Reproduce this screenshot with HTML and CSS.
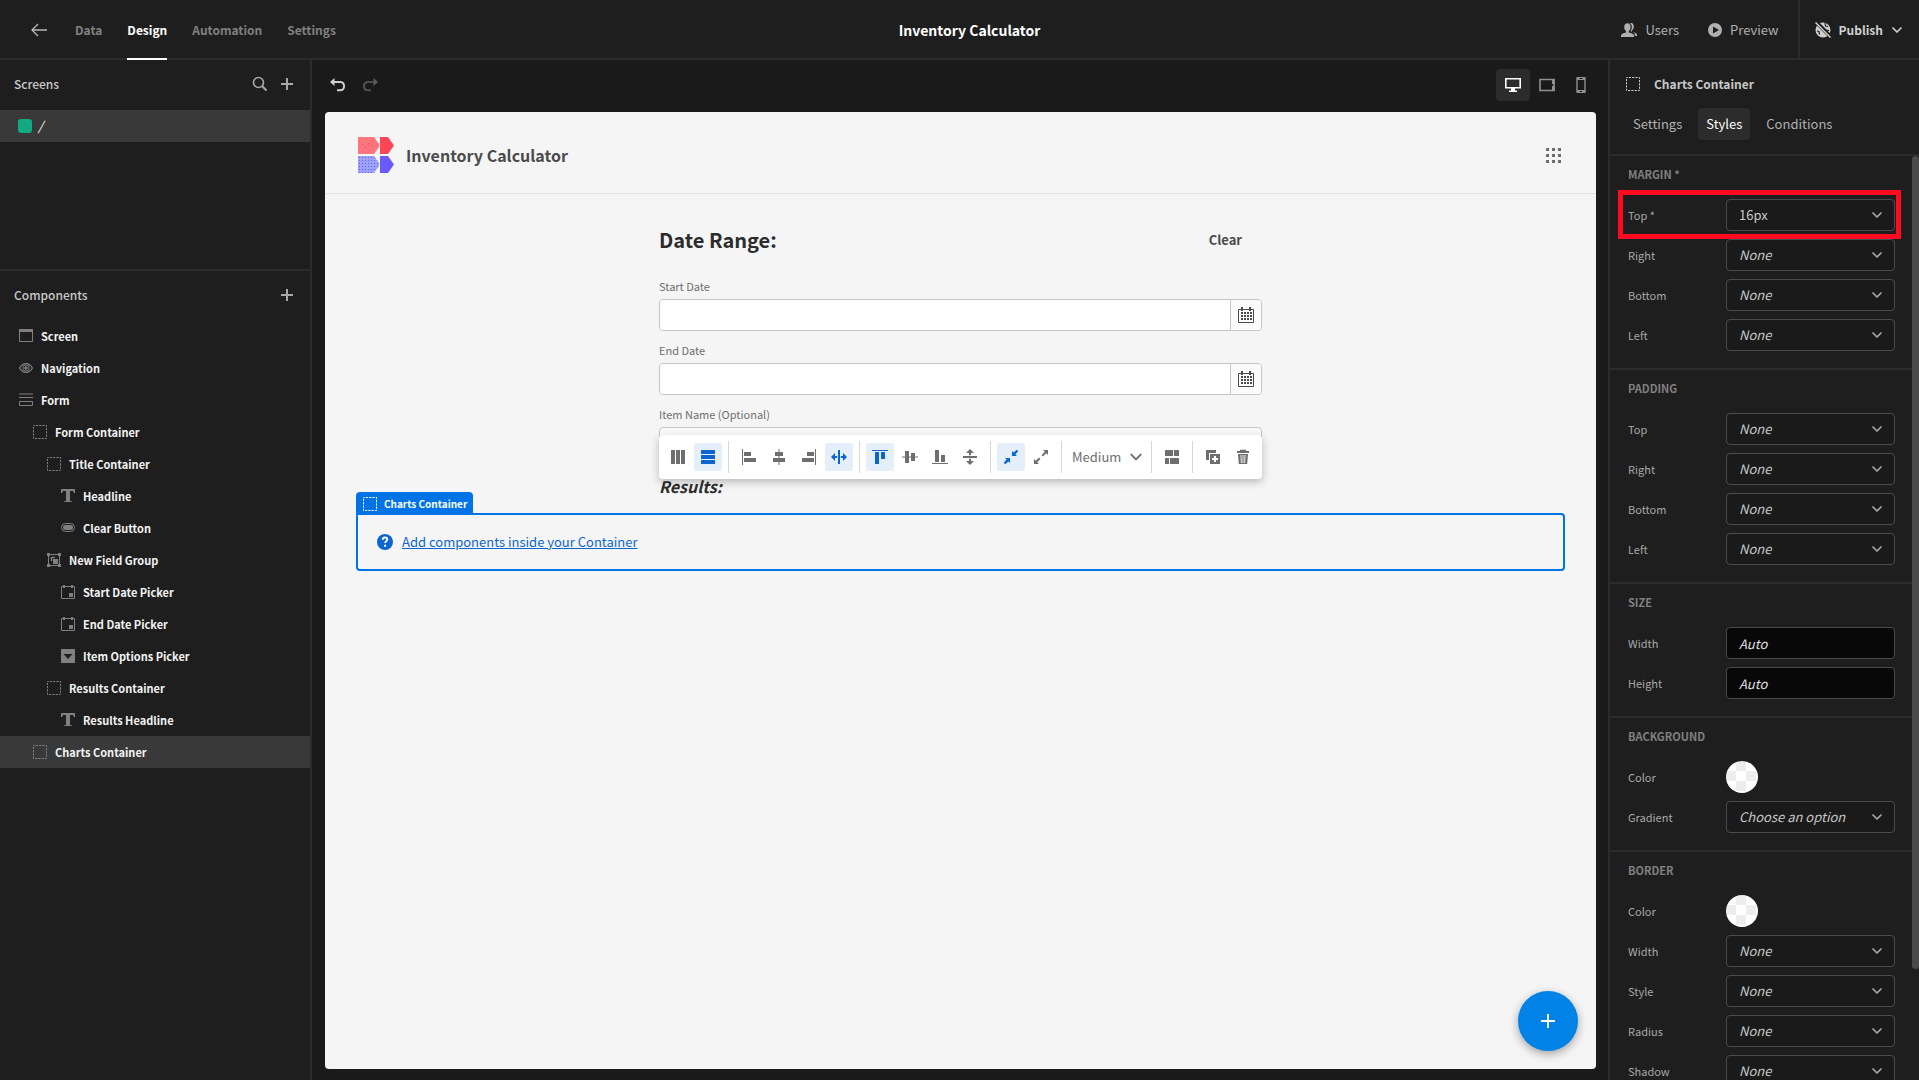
FILE: index.html
```html
<!DOCTYPE html>
<html lang="en">
<head>
<meta charset="utf-8">
<title>Inventory Calculator</title>
<meta name="viewport" content="width=device-width, initial-scale=1">
<link rel="stylesheet" href="styles.css">
</head>
<body>
<svg class="sprite" aria-hidden="true">
  <symbol id="i-chevron" viewBox="0 0 12 12"><path d="M2 4l4 4 4-4" fill="none" stroke="currentColor" stroke-width="1.7" stroke-linecap="round" stroke-linejoin="round"/></symbol>
  <symbol id="i-plus" viewBox="0 0 14 14"><path d="M7 1v12M1 7h12" stroke="currentColor" stroke-width="2"/></symbol>
  <symbol id="i-box" viewBox="0 0 14 14"><rect x=".5" y=".5" width="13" height="13" fill="none" stroke="currentColor" stroke-dasharray="2.2 1.1" stroke-dashoffset="1"/></symbol>
  <symbol id="i-text" viewBox="0 0 14 14"><path d="M0 0h14v4h-1.200l-.8-2H9v9.800l2 .6V13H3v-.6l2-.6V2H2l-.8 2H0z" fill="currentColor"/></symbol>
  <symbol id="i-date" viewBox="0 0 14 14"><path d="M.5 1.500h13v12H.5z" fill="none" stroke="currentColor"/><path d="M2 0h2v3H2zM10 0h2v3h-2zM8 8h4v4H8z" fill="currentColor"/></symbol>
  <symbol id="i-cal" viewBox="0 0 18 18"><path d="M1.500 3.500h15v13h-15z" fill="none" stroke="currentColor"/><path d="M4 1h2v4H4zM12 1h2v4h-2zM4 6h2v2H4zM7 6h2v2H7zM10 6h2v2h-2zM13 6h2v2h-2zM4 9h2v2H4zM7 9h2v2H7zM10 9h2v2h-2zM13 9h2v2h-2zM4 12h2v2H4zM7 12h2v2H7zM10 12h2v2h-2zM13 12h2v2h-2z" fill="currentColor"/></symbol>
</svg>
<div class="builder">
  <header class="topbar">
    <nav class="topnav" aria-label="App">
      <a class="back" href="#" aria-label="Back"><svg width="16" height="14" viewBox="0 0 16 14"><path d="M7 1L1 7l6 6M1 7h15" fill="none" stroke="currentColor" stroke-width="1.300"/></svg></a>
      <a href="#">Data</a>
      <a class="active" href="#">Design</a>
      <a href="#">Automation</a>
      <a href="#">Settings</a>
    </nav>
    <h1 class="app-name">Inventory Calculator</h1>
    <div class="top-actions">
      <button class="top-btn" type="button"><svg width="16" height="16" viewBox="0 0 16 16" fill="currentColor"><path d="M11.500 10.200c-.8-.3-.9-1.300-.3-1.900 1-1 1.600-2.200 1.600-3.900C12.800 2.200 11.600 1 10 1c-.4 0-.8.100-1.100.2C10.200 2 10.800 3.200 10.800 4.900c0 1.600-.5 2.900-1.300 4l4.300 2.700v2.300H16v-1.100c0-1.600-2.400-2.300-4.500-2.600z"/><path d="M8.300 10.700c-.8-.3-.9-1.200-.4-1.700C9 7.900 9.600 6.600 9.600 4.900 9.600 2.600 8.300 1.300 6.400 1.300S3.200 2.600 3.200 4.900c0 1.700.6 3 1.700 4.100.5.5.4 1.400-.4 1.700C2.400 11 0 11.900 0 13.500V15h13v-1.500c0-1.600-2.600-2.500-4.700-2.800z"/></svg>Users</button>
      <button class="top-btn" type="button"><svg width="14" height="14" viewBox="0 0 14 14"><path fill="currentColor" fill-rule="evenodd" d="M7 0a7 7 0 1 0 0 14A7 7 0 0 0 7 0zM5 3.500l6 3.500-6 3.500z"/></svg>Preview</button>
      <button class="top-btn publish" type="button"><svg width="16" height="16" viewBox="0 0 16 16"><circle cx="8" cy="8" r="7.500" fill="currentColor"/><path d="M5 2.500l1.500 2M2 9l2 .5.5 3M10 1l.5 3 2.500.5M11 8l3 .5" fill="none" stroke="#1e1e1e" stroke-width="1.200"/><path d="M1 0l16 16" stroke="#1e1e1e" stroke-width="4"/><path d="M.5.500l15 15" stroke="currentColor" stroke-width="1.500"/></svg>Publish<svg width="12" height="12"><use href="#i-chevron"/></svg></button>
    </div>
  </header>

  <aside class="left">
    <section class="screens">
      <div class="panel-head">
        <h2>Screens</h2>
        <button class="icon-btn" type="button" aria-label="Search"><svg width="16" height="16" viewBox="0 0 16 16"><circle cx="6.500" cy="6.500" r="5" fill="none" stroke="currentColor" stroke-width="1.600"/><path d="M10.200 10.200L14.500 14.500" stroke="currentColor" stroke-width="2"/></svg></button>
        <button class="icon-btn" type="button" aria-label="Add screen"><svg width="14" height="14"><use href="#i-plus"/></svg></button>
      </div>
      <a class="screen-row" href="#"><span class="swatch"></span><em>/</em></a>
    </section>
    <section class="components">
      <div class="panel-head">
        <h2>Components</h2>
        <button class="icon-btn" type="button" aria-label="Add component"><svg width="14" height="14"><use href="#i-plus"/></svg></button>
      </div>
      <ul class="tree">
        <li class="l0"><svg width="14" height="14" viewBox="0 0 14 14"><path d="M.5 1.500h13v11H.5z" fill="none" stroke="currentColor"/><path d="M0 0h14v3H0z" fill="currentColor"/></svg>Screen</li>
        <li class="l0"><svg width="14" height="14" viewBox="0 0 14 14"><path d="M.6 7C2.200 4 4.500 2.600 7 2.600S11.800 4 13.400 7C11.800 10 9.500 11.400 7 11.400S2.200 10 .6 7z" fill="none" stroke="currentColor" stroke-width="1.200"/><circle cx="7" cy="7" r="3.200" fill="none" stroke="currentColor"/><circle cx="7" cy="7" r="1.800" fill="currentColor"/></svg>Navigation</li>
        <li class="l0"><svg width="14" height="14" viewBox="0 0 14 14"><path d="M0 1h14M0 4.500h14" stroke="currentColor"/><path d="M.5 8.500h13v4H.5z" fill="none" stroke="currentColor"/></svg>Form</li>
        <li class="l1"><svg width="14" height="14"><use href="#i-box"/></svg>Form Container</li>
        <li class="l2"><svg width="14" height="14"><use href="#i-box"/></svg>Title Container</li>
        <li class="l3"><svg width="14" height="14"><use href="#i-text"/></svg>Headline</li>
        <li class="l3"><svg width="14" height="14" viewBox="0 0 14 14"><rect x=".5" y="2.500" width="13" height="8" rx="4" fill="none" stroke="currentColor"/><rect x="2" y="4" width="10" height="5" rx="2.500" fill="currentColor"/></svg>Clear Button</li>
        <li class="l2"><svg width="14" height="14" viewBox="0 0 14 14"><path d="M1.500 1.500h11v11h-11z" fill="none" stroke="currentColor"/><path d="M0 0h3v3H0zM11 0h3v3h-3zM0 11h3v3H0zM11 11h3v3h-3zM6 6h5v5H6z" fill="currentColor"/><path d="M4.500 8V4.500H8" fill="none" stroke="currentColor" stroke-width="1.500"/></svg>New Field Group</li>
        <li class="l3"><svg width="14" height="14"><use href="#i-date"/></svg>Start Date Picker</li>
        <li class="l3"><svg width="14" height="14"><use href="#i-date"/></svg>End Date Picker</li>
        <li class="l3"><svg width="14" height="14" viewBox="0 0 14 14"><path fill="currentColor" fill-rule="evenodd" d="M0 0h14v14H0zM2.500 5L7 10l4.500-5z"/></svg>Item Options Picker</li>
        <li class="l2"><svg width="14" height="14"><use href="#i-box"/></svg>Results Container</li>
        <li class="l3"><svg width="14" height="14"><use href="#i-text"/></svg>Results Headline</li>
        <li class="l1 selected"><svg width="14" height="14"><use href="#i-box"/></svg>Charts Container</li>
      </ul>
    </section>
  </aside>

  <main class="stage">
    <div class="stage-bar">
      <button class="icon-btn bright" type="button" aria-label="Undo"><svg width="16" height="14" viewBox="0 0 16 14"><path d="M2 4h8.500a4.200 4.200 0 0 1 0 8.300H7" fill="none" stroke="currentColor" stroke-width="1.900"/><path d="M0 4l4.500-4v8z" fill="currentColor"/></svg></button>
      <button class="icon-btn dim" type="button" aria-label="Redo"><svg width="16" height="14" viewBox="0 0 16 14"><path d="M14 4H5.500a4.200 4.200 0 0 0 0 8.300H9" fill="none" stroke="currentColor" stroke-width="1.600"/><path d="M16 4l-4.500-4v8z" fill="currentColor"/></svg></button>
      <div class="devices">
        <button class="device on" type="button" aria-label="Desktop"><svg width="16" height="16" viewBox="0 0 16 16"><path d="M.8 1.800h14.400v9H.8z" fill="none" stroke="currentColor" stroke-width="1.600"/><path d="M6 11h4v2.500h2V15H4v-1.500h2z" fill="currentColor"/></svg></button>
        <button class="device" type="button" aria-label="Tablet"><svg width="16" height="16" viewBox="0 0 16 16"><path d="M1 2.500h14v11H1z" fill="none" stroke="currentColor" stroke-width="1.600"/><path d="M13 2h3v5h-3zM13 9h3v5h-3z" fill="currentColor"/></svg></button>
        <button class="device" type="button" aria-label="Mobile"><svg width="16" height="16" viewBox="0 0 16 16"><path d="M4 1h8v14H4z" fill="none" stroke="currentColor" stroke-width="1.400"/><path d="M4 0h8v3H4zM4 13h8v3H4z" fill="currentColor"/><path d="M7 14.500h2M6.500 1.500h3" stroke="#1a1a1a"/></svg></button>
      </div>
    </div>
    <div class="frame">
      <header class="app-head">
        <svg width="36" height="36" viewBox="0 0 36 36">
          <defs><pattern id="dots" width="3" height="3" patternUnits="userSpaceOnUse"><path d="M1 2h1v1H1z" fill="#6a5cf5"/></pattern></defs>
          <path d="M0 0h16l5 7v3l-5 7H0z" fill="#ff757d"/><path d="M22 0h8l6 8.500-6 8.500h-8z" fill="#ff4656"/>
          <path d="M4 7h1v1H4zM10 6h1v1h-1zM14 8h1v1h-1zM7 10h1v1H7zM11 13h1v1h-1z" fill="#ff4656"/>
          <path d="M0 19h16l5 7v3l-5 7H0z" fill="#9aa3f8"/><path d="M0 19h16l5 7v3l-5 7H0z" fill="url(#dots)"/><path d="M22 19h8l6 8.500-6 8.500h-8z" fill="#6a5af9"/>
        </svg>
        <h2>Inventory Calculator</h2>
        <button class="apps" type="button" aria-label="Apps"><svg width="15" height="15" viewBox="0 0 15 15"><path d="M0 0h3v3H0zM6 0h3v3H6zM12 0h3v3h-3zM0 6h3v3H0zM6 6h3v3H6zM12 6h3v3h-3zM0 12h3v3H0zM6 12h3v3H6zM12 12h3v3h-3z" fill="currentColor"/></svg></button>
      </header>
      <div class="form-wrap">
        <div class="form-area">
          <div class="form-title"><h3>Date Range:</h3><button class="clear" type="button">Clear</button></div>
          <div class="field"><label for="start">Start Date</label><div class="date"><input id="start" type="text"><button type="button" aria-label="Pick start date"><svg width="18" height="18"><use href="#i-cal"/></svg></button></div></div>
          <div class="field"><label for="end">End Date</label><div class="date"><input id="end" type="text"><button type="button" aria-label="Pick end date"><svg width="18" height="18"><use href="#i-cal"/></svg></button></div></div>
          <div class="field"><label for="item">Item Name (Optional)</label><select id="item" class="item"><option></option></select></div>
          <h4>Results:</h4>
          <div class="float-bar" role="toolbar">
            <button type="button" aria-label="Columns"><svg width="16" height="16" viewBox="0 0 16 16"><path d="M1 1h4v14H1zM6 1h4v14H6zM11 1h4v14h-4z"/></svg></button>
            <button class="on" type="button" aria-label="Rows"><svg width="16" height="16" viewBox="0 0 16 16"><path d="M1 1h14v4H1zM1 6h14v4H1zM1 11h14v4H1z"/></svg></button>
            <i></i>
            <button type="button" aria-label="Align left"><svg width="16" height="16" viewBox="0 0 16 16"><path d="M1 0h1v16H1zM3 3h7v4H3zM3 9h12v4H3z"/></svg></button>
            <button type="button" aria-label="Align center"><svg width="16" height="16" viewBox="0 0 16 16"><path d="M7.500 0h1v16h-1zM4 3h8v4H4zM2 9h12v4H2z"/></svg></button>
            <button type="button" aria-label="Align right"><svg width="16" height="16" viewBox="0 0 16 16"><path d="M14 0h1v16h-1zM6 3h7v4H6zM1 9h12v4H1z"/></svg></button>
            <button class="on" type="button" aria-label="Stretch"><svg width="16" height="16" viewBox="0 0 16 16"><path d="M7 1h2v14H7zM0 8l4-4v3h2.200v2H4v3zM16 8l-4-4v3H9.800v2H12v3z"/></svg></button>
            <i></i>
            <button class="on" type="button" aria-label="Align top"><svg width="16" height="16" viewBox="0 0 16 16"><path d="M0 1h16v1H0zM3 3h4v12H3zM9 3h4v7H9z"/></svg></button>
            <button type="button" aria-label="Align middle"><svg width="16" height="16" viewBox="0 0 16 16"><path d="M0 7.500h16v1H0zM3 2h4v12H3zM9 4h4v8H9z"/></svg></button>
            <button type="button" aria-label="Align bottom"><svg width="16" height="16" viewBox="0 0 16 16"><path d="M0 14h16v1H0zM3 1h4v12H3zM9 6h4v7H9z"/></svg></button>
            <button type="button" aria-label="Stretch vertically"><svg width="16" height="16" viewBox="0 0 16 16"><path d="M1 7h14v2H1zM8 0l4 4H9v2.200H7V4H4zM8 16l4-4H9V9.800H7V12H4z"/></svg></button>
            <i></i>
            <button class="on" type="button" aria-label="Shrink"><svg width="16" height="16" viewBox="0 0 16 16"><path d="M9 7V2l1.600 1.600L13.800.800 15.200 2.200 12.400 5.400 14 7zM7 9v5l-1.600-1.600L2.200 15.200.800 13.800 3.600 10.600 2 9z"/></svg></button>
            <button type="button" aria-label="Grow"><svg width="16" height="16" viewBox="0 0 16 16"><path d="M15 1v5l-1.800-1.800L10 7.400 8.600 6l3.200-3.200L10 1zM1 15v-5l1.800 1.800L6 8.600 7.400 10l-3.200 3.200L6 15z"/></svg></button>
            <i></i>
            <button class="size" type="button">Medium<svg width="14" height="14"><use href="#i-chevron"/></svg></button>
            <i></i>
            <button type="button" aria-label="Layout"><svg width="16" height="16" viewBox="0 0 16 16"><path d="M1 1h8v6H1zM10 1h5v6h-5zM1 9h4v6H1zM6 9h9v6H6z"/></svg></button>
            <i></i>
            <button type="button" aria-label="Duplicate"><svg width="16" height="16" viewBox="0 0 16 16"><path fill-rule="evenodd" d="M1 1h10v3H4v7H1zM5 5h10v10H5zM9 7v2H7v2h2v2h2v-2h2V9h-2V7z"/></svg></button>
            <button type="button" aria-label="Delete"><svg width="16" height="16" viewBox="0 0 16 16"><path fill-rule="evenodd" d="M5 2V.800h6V2h3v2H2V2zM3 5h10l-.8 10H3.800zM5.500 6l.4 8h.8l-.3-8zM7.600 6v8h.8V6zM9.600 6l-.3 8h.8l.4-8z"/></svg></button>
          </div>
        </div>
        <div class="charts">
          <span class="charts-tag"><svg width="14" height="14"><use href="#i-box"/></svg>Charts Container</span>
          <svg width="16" height="16" viewBox="0 0 16 16"><circle cx="8" cy="8" r="8" fill="#0d66d0"/><path d="M5.800 5.800C5.800 4.400 6.700 3.500 8.100 3.500s2.200.8 2.200 2c0 1.600-2.100 1.700-2.100 3.500M8.100 10.800v2" fill="none" stroke="#fff" stroke-width="1.900"/></svg>
          <a href="#">Add components inside your Container</a>
        </div>
      </div>
      <button class="fab" type="button" aria-label="Add"><svg width="16" height="16" viewBox="0 0 16 16"><path d="M8 1v14M1 8h14" stroke="#fff" stroke-width="2"/></svg></button>
    </div>
  </main>

  <aside class="right">
    <div class="props-head">
      <h2><svg width="14" height="14"><use href="#i-box"/></svg>Charts Container</h2>
      <div class="tabs"><button type="button">Settings</button><button class="on" type="button">Styles</button><button type="button">Conditions</button></div>
    </div>
    <div class="props">
      <section>
        <h3>MARGIN *</h3>
        <div class="prop highlight"><label for="m1">Top *</label><span class="sel"><select id="m1" class="set"><option>16px</option></select><svg width="12" height="12"><use href="#i-chevron"/></svg></span></div>
        <div class="prop"><label for="m2">Right</label><span class="sel"><select id="m2"><option>None</option></select><svg width="12" height="12"><use href="#i-chevron"/></svg></span></div>
        <div class="prop"><label for="m3">Bottom</label><span class="sel"><select id="m3"><option>None</option></select><svg width="12" height="12"><use href="#i-chevron"/></svg></span></div>
        <div class="prop"><label for="m4">Left</label><span class="sel"><select id="m4"><option>None</option></select><svg width="12" height="12"><use href="#i-chevron"/></svg></span></div>
      </section>
      <section>
        <h3>PADDING</h3>
        <div class="prop"><label for="p1">Top</label><span class="sel"><select id="p1"><option>None</option></select><svg width="12" height="12"><use href="#i-chevron"/></svg></span></div>
        <div class="prop"><label for="p2">Right</label><span class="sel"><select id="p2"><option>None</option></select><svg width="12" height="12"><use href="#i-chevron"/></svg></span></div>
        <div class="prop"><label for="p3">Bottom</label><span class="sel"><select id="p3"><option>None</option></select><svg width="12" height="12"><use href="#i-chevron"/></svg></span></div>
        <div class="prop"><label for="p4">Left</label><span class="sel"><select id="p4"><option>None</option></select><svg width="12" height="12"><use href="#i-chevron"/></svg></span></div>
      </section>
      <section>
        <h3>SIZE</h3>
        <div class="prop"><label for="w">Width</label><input id="w" type="text" placeholder="Auto"></div>
        <div class="prop"><label for="h">Height</label><input id="h" type="text" placeholder="Auto"></div>
      </section>
      <section>
        <h3>BACKGROUND</h3>
        <div class="prop"><label for="bgc">Color</label><button id="bgc" class="color" type="button"></button></div>
        <div class="prop"><label for="g">Gradient</label><span class="sel"><select id="g"><option>Choose an option</option></select><svg width="12" height="12"><use href="#i-chevron"/></svg></span></div>
      </section>
      <section>
        <h3>BORDER</h3>
        <div class="prop"><label for="bc">Color</label><button id="bc" class="color" type="button"></button></div>
        <div class="prop"><label for="b1">Width</label><span class="sel"><select id="b1"><option>None</option></select><svg width="12" height="12"><use href="#i-chevron"/></svg></span></div>
        <div class="prop"><label for="b2">Style</label><span class="sel"><select id="b2"><option>None</option></select><svg width="12" height="12"><use href="#i-chevron"/></svg></span></div>
        <div class="prop"><label for="b3">Radius</label><span class="sel"><select id="b3"><option>None</option></select><svg width="12" height="12"><use href="#i-chevron"/></svg></span></div>
        <div class="prop"><label for="b4">Shadow</label><span class="sel"><select id="b4"><option>None</option></select><svg width="12" height="12"><use href="#i-chevron"/></svg></span></div>
      </section>
      <div class="thumb"></div>
    </div>
  </aside>
</div>
</body>
</html>
```
FILE: styles.css
```css
* { box-sizing: border-box; }
body, h1, h2, h3, h4, ul { margin: 0; padding: 0; }
body {
  background: #1a1a1a;
  color: #c8c8c8;
  font: 400 13px/20px "Source Sans Pro", "Noto Sans CJK SC", sans-serif;
}
h1, h2, h3, h4 { font-size: 12px; font-weight: 500; }
svg { display: block; flex: none; }
button, input, select { font: inherit; color: inherit; }
button { background: none; border: 0; padding: 0; cursor: pointer; }
a { color: inherit; text-decoration: none; }
.sprite { position: absolute; width: 0; height: 0; }

.builder {
  height: 100vh;
  display: grid;
  grid-template: 60px minmax(0, 1fr) / 312px minmax(0, 1fr) 311px;
  overflow: hidden;
}

/* Top bar */
.topbar {
  grid-column: 1 / -1;
  display: grid;
  grid-template-columns: 1fr auto 1fr;
  align-items: stretch;
  padding-left: 20px;
  background: #1e1e1e;
  box-shadow: inset 0 -2px #2c2c2c;
}
.topnav { display: flex; gap: 25px; color: #808080; font-size: 12px; font-weight: 600; padding-left: 11px; }
.topnav a { display: flex; align-items: center; }
.topnav .back { color: #b8b8b8; margin-right: 3px; }
.topnav .active { color: #fff; box-shadow: inset 0 -2px #fff; }
.app-name { align-self: center; color: #fff; font-size: 14px; font-weight: 600; }
.top-actions { display: flex; justify-content: flex-end; }
.top-btn { display: flex; align-items: center; gap: 8px; margin-right: 29px; color: #b0b0b0; }
.top-btn + .top-btn { margin-right: 19px; }
.top-btn.top-btn.publish {
  margin: 0;
  padding: 0 16px 0 15px;
  border-left: 2px solid #2c2c2c;
  color: #d0d0d0;
  font-size: 12px;
  font-weight: 600;
}

/* Left side */
.left { display: flex; flex-direction: column; background: #1e1e1e; border-right: 2px solid #2c2c2c; }
.screens { height: 211px; border-bottom: 2px solid #2c2c2c; }
.panel-head { display: flex; align-items: center; gap: 12px; height: 50px; padding: 0 16px 2px 14px; }
.components .panel-head { height: 49px; }
.panel-head h2 { flex: 1; }
.icon-btn { color: #a8a8a8; }
.screen-row { display: flex; align-items: center; gap: 6px; height: 32px; padding-left: 18px; background: #393939; color: #fff; }
.swatch { width: 14px; height: 14px; border-radius: 3px; background: #12a983; }
.tree { list-style: none; color: #f2f2f2; font-size: 11px; font-weight: 700; }
.tree li { display: flex; align-items: center; gap: 8px; height: 32px; }
.tree svg { color: #808080; }
.tree .l0 { padding-left: 19px; }
.tree .l1 { padding-left: 33px; }
.tree .l2 { padding-left: 47px; }
.tree .l3 { padding-left: 61px; }
.tree .selected { background: #393939; }

/* Canvas */
.stage { display: flex; flex-direction: column; padding-bottom: 11px; }
.stage-bar { display: flex; align-items: center; gap: 16px; height: 52px; padding: 0 10px 2px 18px; }
.bright { color: #d0d0d0; }
.dim { color: #5c5c5c; }
.devices { display: flex; margin-left: auto; }
.device { display: grid; place-items: center; width: 34px; height: 32px; border-radius: 4px; color: #909090; }
.device.on { background: #2c2c2c; color: #fff; }
.frame { position: relative; flex: 1; margin: 0 12px 0 13px; border-radius: 4px; background: #f5f5f5; color: #4b4b4b; }
.app-head { display: flex; align-items: center; gap: 12px; height: 82px; padding: 5px 35px 0 33px; border-bottom: 1px solid #e1e1e1; }
.app-head h2 { flex: 1; font-size: 16px; font-weight: 600; line-height: 24px; }
.apps { color: #6e6e6e; }
.form-wrap { padding: 30px 31px; }
.form-area { position: relative; width: 603px; max-width: 100%; margin: 0 auto; }
.form-title { display: flex; align-items: center; justify-content: space-between; height: 32px; padding-right: 20px; margin-bottom: 18px; }
.form-title h3 { font-size: 20px; font-weight: 600; color: #2c2c2c; }
.clear { font-weight: 700; }
.field { display: flex; flex-direction: column; height: 64px; font-size: 11px; color: #6e6e6e; }
.field label { height: 25px; line-height: 24px; }
.date { display: flex; height: 32px; border: 1px solid #c6c6c6; border-radius: 4px; overflow: hidden; }
.date input { flex: 1; border: 0; padding: 0 12px; background: #fff; }
.date button { display: grid; place-items: center; width: 31px; border-left: 1px solid #c6c6c6; background: #fafafa; color: #4b4b4b; }
.item { appearance: none; height: 32px; border: 1px solid #c6c6c6; border-radius: 4px; background: #fafafa; }
.form-area h4 { height: 36px; padding-top: 8px; font-size: 16px; font-weight: 600; font-style: italic; line-height: 24px; color: #2c2c2c; }
.float-bar {
  position: absolute;
  left: 0;
  right: 0;
  bottom: 23px;
  display: flex;
  align-items: center;
  gap: 2px;
  height: 44px;
  padding: 0 5px;
  border-radius: 4px;
  background: #fff;
  box-shadow: 0 3px 8px rgba(0, 0, 0, .25);
  color: #6e6e6e;
}
.float-bar button { display: grid; place-items: center; width: 28px; height: 28px; border-radius: 2px; }
.float-bar svg { fill: currentColor; }
.float-bar .on { background: #e5effa; color: #0d66d0; }
.float-bar i { width: 1px; height: 32px; margin: 0 4px; background: #d8d8d8; }
.float-bar .size { display: flex; align-items: center; justify-content: space-between; flex: 1; padding: 0 2px 0 4px; }
.charts { position: relative; display: flex; align-items: center; gap: 9px; height: 58px; padding: 0 19px; margin-top: 11px; border: 2px solid #0073e6; border-radius: 0 4px 4px 4px; }
.charts a { color: #0d66d0; text-decoration: underline; }
.charts-tag {
  position: absolute;
  left: -2px;
  bottom: 100%;
  display: flex;
  align-items: center;
  gap: 7px;
  height: 23px;
  padding: 0 6px 0 7px;
  border-radius: 4px 4px 0 0;
  background: #0073e6;
  color: #fff;
  font-size: 10px;
  font-weight: 700;
  white-space: nowrap;
}
.fab { position: absolute; right: 18px; bottom: 18px; display: grid; place-items: center; width: 60px; height: 60px; border-radius: 50%; background: #0082e6; box-shadow: 0 3px 10px rgba(0, 0, 0, .35); }

/* Right side */
.right { display: flex; flex-direction: column; min-height: 0; background: #1e1e1e; border-left: 2px solid #2c2c2c; }
.props-head { height: 96px; border-bottom: 2px solid #2c2c2c; padding: 14px 15px 0; }
.props-head h2 { display: flex; align-items: center; gap: 14px; padding-left: 1px; font-weight: 600; }
.tabs { display: flex; gap: 8px; margin-top: 14px; }
.tabs button { height: 32px; padding: 0 8px; border-radius: 4px; color: #b0b0b0; }
.tabs .on { background: #2c2c2c; color: #fff; }
.props { position: relative; flex: 1; min-height: 0; overflow: hidden; padding-right: 7px; }
.props section { display: flex; flex-direction: column; gap: 8px; padding: 8px 17px 17px 18px; border-bottom: 2px solid #2c2c2c; }
.props h3 { height: 27px; font-size: 11px; font-weight: 600; color: #808080; }
.prop { position: relative; display: grid; grid-template-columns: 98px 1fr; align-items: center; height: 32px; }
.prop label { font-size: 11px; color: #a8a8a8; }
.prop input, .prop select { width: 100%; height: 32px; padding: 0 12px; border: 1px solid #4b4b4b; border-radius: 4px; font-style: italic; }
.prop select { appearance: none; background: #1a1a1a; }
.prop .set { font-style: normal; }
.prop input { background: #080808; }
.prop input::placeholder { color: #e0e0e0; opacity: 1; }
.sel { position: relative; }
.sel svg { position: absolute; right: 12px; top: 10px; pointer-events: none; color: #a8a8a8; }
.color { width: 32px; height: 32px; border-radius: 50%; background: repeating-conic-gradient(#ededed 0 25%, #fff 0 50%) 0 0 / 20px 20px; }
.highlight::after { content: ""; position: absolute; inset: -9px -6px -8px -10px; border: 5px solid #ff0a20; pointer-events: none; z-index: 1; }
.thumb { position: absolute; top: 0; right: 0; width: 7px; height: 88%; border-radius: 4px; background: #4b4b4b; }
```
